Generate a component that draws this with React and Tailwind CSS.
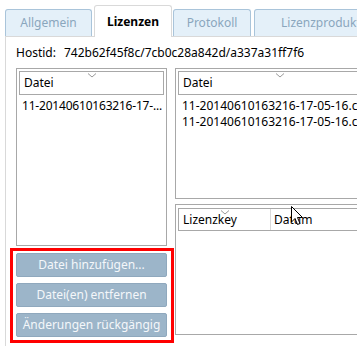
const Chevron = () => (
  <svg className="absolute left-1/2 top-[1px] -translate-x-1/2" width="9" height="5" viewBox="0 0 9 5">
    <path d="M0.5 0.5 L4.5 4 L8.5 0.5" fill="none" stroke="#9a9a9a" strokeWidth="1" />
  </svg>
);

const Header = ({ children }) => (
  <div className="relative flex h-[24px] items-center border border-[#a8a8a8] pl-[4px] text-[12px] text-black">
    <Chevron />
    {children}
  </div>
);

const Tab = ({ label, active, className }) => (
  <div
    className={
      active
        ? 'relative z-10 -mb-px flex h-[32px] items-center justify-center whitespace-nowrap rounded-t-[3px] border border-b-0 border-[#d9d9d9] bg-white text-[12px] font-bold text-black ' + className
        : 'flex h-[27px] items-center justify-center whitespace-nowrap rounded-t-[3px] border border-b-0 border-[#a9c4da] bg-[#e4f0f9] text-[12px] text-[#8aa6bd] ' + className
    }
  >
    {label}
  </div>
);

const Btn = ({ label }) => (
  <button className="flex h-[24px] w-full items-center justify-center rounded-[2px] border border-[#8fa8bd] bg-[#9cb5c9] text-[12px] text-[#f4f7fa]">
    {label}
  </button>
);

export default function App() {
  const file = '11-20140610163216-17-05-16.cnsl';

  return (
    <div
      className="relative h-[346px] w-[357px] overflow-hidden bg-white"
      style={{ fontFamily: '"Noto Sans", "Open Sans", sans-serif' }}
    >
      <div className="flex h-[36px] items-end gap-[2px] pl-[5px]">
        <Tab label="Allgemein" className="w-[87px] shrink-0" />
        <Tab label="Lizenzen" active className="w-[78px] shrink-0" />
        <Tab label="Protokoll" className="ml-[-1px] w-[78px] shrink-0" />
        <Tab label="Lizenzprodukt-Daten" className="ml-[1px] w-[140px] shrink-0 !justify-start pl-[26px]" />
      </div>

      <div className="ml-[5px] h-[320px] border-l border-t border-[#d9d9d9] pl-[10px]">
        <div className="flex h-[31px] items-center text-[12px] text-black">
          <span>Hostid:</span>
          <span className="ml-[8px]">742b62f45f8c/7cb0c28a842d/a337a31ff7f6</span>
        </div>

        <div className="flex gap-[8px]">
          <div className="flex w-[151px] shrink-0 flex-col">
            <div className="h-[178px] border border-[#a8a8a8] p-[2px]">
              <Header>Datei</Header>
              <div className="mt-[3px] h-[16px] whitespace-nowrap pl-[3px] text-[12px] leading-[16px] tracking-[-0.2px] text-black">
                11-20140610163216-17-...
              </div>
            </div>

            <div className="ml-[-6px] mr-[-7px] mt-[2px] flex flex-col gap-[6px] border-[3px] border-[#ff0000] pb-[3px] pl-[3px] pr-[4px] pt-[2px]">
              <Btn label="Datei hinzufügen..." />
              <Btn label="Datei(en) entfernen" />
              <Btn label="Änderungen rückgängig" />
            </div>
          </div>

          <div className="flex w-[210px] shrink-0 flex-col gap-[5px]">
            <div className="h-[131px] border border-[#a8a8a8] p-[2px]">
              <Header>Datei</Header>
              <div className="mt-[3px] pl-[4px] text-[12px] leading-[16px] text-black">
                <div className="whitespace-nowrap">{file}</div>
                <div className="whitespace-nowrap">{file}</div>
              </div>
            </div>

            <div className="h-[131px] border border-[#a8a8a8] p-[2px] pt-[3px]">
              <div className="flex h-[23px] border border-[#a8a8a8] text-[12px] text-black">
                <div className="relative flex w-[92px] items-center border-r border-[#dadada] pl-[4px]">
                  <Chevron />
                  Lizenzkey
                </div>
                <div className="flex items-center pl-[3px]">Datum</div>
              </div>
            </div>
          </div>
        </div>
      </div>

      <svg className="absolute left-[291px] top-[206px]" width="13" height="20" viewBox="0 0 13 20">
        <path
          d="M0.5 0.5 L0.5 16 L4 12.5 L6.5 18.5 L9 17.5 L6.5 11.5 L11.5 11.5 Z"
          fill="#ffffff"
          stroke="#000000"
          strokeWidth="1"
          strokeLinejoin="miter"
        />
      </svg>
    </div>
  );
}
